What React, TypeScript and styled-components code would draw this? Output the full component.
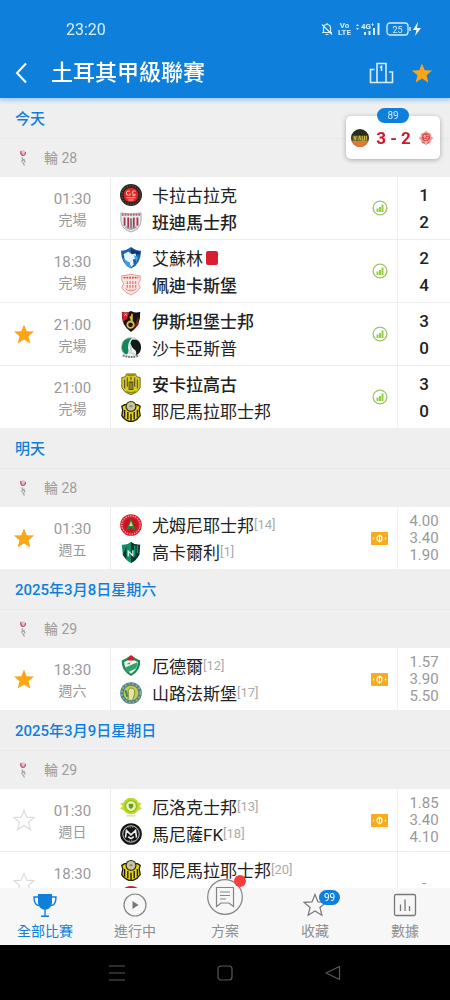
import React, { useState } from 'react';
import styled, { createGlobalStyle } from 'styled-components';

const Global = createGlobalStyle`
  * { box-sizing: border-box; }
  body {
    margin: 0;
    font-family: Roboto, "Noto Sans CJK TC", sans-serif;
    background: #efefef;
  }
  button {
    font: inherit;
    color: inherit;
    background: none;
    border: 0;
    padding: 0;
    cursor: pointer;
  }
  svg { display: block; flex: none; }
  h1, h2, h3, p { margin: 0; font-weight: inherit; font-size: inherit; }
`;

const Screen = styled.div`
  display: flex;
  flex-direction: column;
  height: 100vh;
`;

const Header = styled.header`
  position: relative;
  z-index: 2;
  background: #0f7fdc;
  color: #fff;
  box-shadow: 0 1px 5px 1px #8cc6f8;
`;

const StatusBar = styled.div`
  display: flex;
  align-items: center;
  justify-content: space-between;
  height: 48px;
  padding: 10px 28px 0 66px;
  font-size: 16px;
  color: #d8eefc;
`;

const StatusIcons = styled.div`
  display: flex;
  align-items: center;
  gap: 5px;
`;

const VoLte = styled.span`
  font-size: 8px;
  line-height: 7px;
  font-weight: 700;
  text-align: center;
`;

const TitleBar = styled.div`
  display: flex;
  align-items: center;
  height: 50px;
  padding: 0 17px 0 13px;
`;

const Title = styled.h1`
  flex: 1;
  margin-left: 20px;
  font-size: 22px;
  line-height: 30px;
  font-weight: 500;
`;

const HeaderActions = styled.div`
  display: flex;
  align-items: center;
  gap: 17px;
`;

const Content = styled.main`
  position: relative;
  display: flex;
  flex: 1;
  min-height: 0;
`;

const List = styled.div`
  flex: 1;
  overflow-y: auto;
  scrollbar-width: none;
  background: #efefef;
`;

const LiveCard = styled.button`
  position: absolute;
  z-index: 1;
  top: 18px;
  right: 10px;
  display: flex;
  align-items: center;
  justify-content: space-between;
  width: 94px;
  height: 43px;
  padding: 0 6px 0 5px;
  border-radius: 5px;
  background: #fff;
  box-shadow: 0 1px 5px rgba(0, 0, 0, 0.3);
  color: #d0162c;
  font-size: 17px;
  font-weight: 700;
`;

const LiveMinute = styled.span`
  position: absolute;
  top: -8px;
  left: 31px;
  width: 32px;
  border-radius: 8px;
  background: #0f7fdc;
  color: #cfe9fb;
  font-size: 10px;
  line-height: 15px;
  font-weight: 400;
  text-align: center;
`;

const DateHeading = styled.h2`
  height: 41px;
  padding-left: 15px;
  border-bottom: 1px solid #e8e8e8;
  color: #0f7fdc;
  font-size: 15px;
  line-height: 42px;
  font-weight: 500;
`;

const RoundHeading = styled.h3`
  display: flex;
  align-items: center;
  gap: 15px;
  height: 38px;
  padding-left: 17px;
  color: #9d9d9d;
  font-size: 14px;
  line-height: 20px;
`;

const MatchRow = styled.article`
  display: grid;
  grid-template-columns: 110px 1fr 53px;
  height: 62px;
  background: #fff;
  & + & {
    height: 63px;
    border-top: 1px solid #ececec;
  }
`;

const KickOff = styled.div`
  display: flex;
  align-items: center;
`;

const StarButton = styled.button`
  display: flex;
  justify-content: center;
  width: 48px;
`;

const TimeText = styled.div`
  width: 49px;
  margin-left: auto;
  margin-right: 13px;
  padding-top: 3px;
  color: #999;
  font-size: 15px;
  line-height: 21px;
  text-align: center;
  p + p { font-size: 14px; }
`;

const Fixture = styled.div`
  display: flex;
  align-items: center;
  justify-content: space-between;
  padding: 0 9px;
  border-left: 1px solid #ececec;
`;

const Team = styled.div<{ $winner?: boolean }>`
  display: flex;
  align-items: center;
  height: 27px;
  color: #222;
  font-size: 17px;
  font-weight: ${(p) => (p.$winner ? 500 : 400)};
  white-space: nowrap;
`;

const Teams = styled.div`
  align-self: flex-start;
  padding-top: 4px;
`;

const TeamName = styled.span`
  margin-left: 10px;
`;

const Rank = styled.span`
  color: #aaa;
  font-size: 13px;
`;

const RedCard = styled.span`
  width: 12px;
  height: 14px;
  margin-left: 3px;
  border-radius: 2px;
  background: #d81e30;
`;

const ScoreCell = styled.div`
  display: flex;
  flex-direction: column;
  padding-top: 5px;
  border-left: 1px solid #f1f1f1;
  color: #222;
  font-size: 17px;
  line-height: 27px;
  font-weight: 500;
  text-align: center;
`;

const OddsCell = styled.div`
  display: flex;
  flex-direction: column;
  justify-content: center;
  border-left: 1px solid #f1f1f1;
  color: #999;
  font-size: 15px;
  line-height: 17px;
  text-align: center;
`;

const TabBar = styled.nav`
  position: relative;
  z-index: 2;
  display: grid;
  grid-template-columns: repeat(5, 1fr);
  height: 57px;
  background: #f7f7f7;
`;

const Tab = styled.button<{ $active?: boolean }>`
  display: flex;
  flex-direction: column;
  align-items: center;
  gap: 4px;
  padding-top: 5px;
  color: ${(p) => (p.$active ? '#0f7fdc' : '#8f8f8f')};
  font-size: 14px;
  line-height: 20px;
`;

const TabIcon = styled.span<{ $raised?: boolean }>`
  position: relative;
  display: flex;
  align-items: center;
  justify-content: center;
  width: ${(p) => (p.$raised ? 36 : 24)}px;
  height: ${(p) => (p.$raised ? 36 : 24)}px;
  margin: ${(p) => (p.$raised ? '-14px 0 2px' : '0')};
`;

const TabCount = styled.span`
  position: absolute;
  top: -3px;
  left: 16px;
  width: 21px;
  border-radius: 8px;
  background: #0f7fdc;
  color: #fff;
  font-size: 10px;
  line-height: 15px;
  text-align: center;
`;

const TabDot = styled.span`
  position: absolute;
  top: -4px;
  right: -3px;
  width: 12px;
  height: 12px;
  border-radius: 50%;
  background: #fa3c3c;
`;

const SystemBar = styled.footer`
  display: flex;
  align-items: center;
  justify-content: space-between;
  height: 55px;
  padding: 0 24%;
  background: #000;
`;

const STAR = 'M12 1.5l3 7.4 8 .5-6.1 5.1 2 7.8L12 18l-6.9 4.3 2-7.8L1 9.4l8-.5z';

const Star = ({ on }: { on: boolean }) => (
  <svg width="22" height="22" viewBox="0 0 24 24">
    <path d={STAR} fill={on ? '#fca616' : 'none'} stroke={on ? 'none' : '#d9d9d9'} strokeWidth="1.2" />
  </svg>
);

const crests: Record<string, React.ReactNode> = {
  karagumruk: (
    <>
      <circle cx="12" cy="12" r="12" fill="#2a2322" />
      <circle cx="12" cy="12" r="10" fill="none" stroke="#8d6a5c" strokeWidth="1" strokeDasharray="1.5 1.5" />
      <circle cx="12" cy="12" r="8" fill="#e02524" />
      <path d="M11 8q-4-1-4 2t4 2v-2M17 8q-4-1-3.500 1.500t3 2q0 2-3 1M7 15h10M9 17.500h6" fill="none" stroke="#ffb3a5" strokeWidth="1.200" />
    </>
  ),
  bandirma: (
    <>
      <path d="M1 2q11 3 22 0v9q-1 9-11 12Q2 20 1 11z" fill="#e9eaec" stroke="#a9a4aa" />
      <path d="M2 4h20" stroke="#b4606c" strokeWidth="2.500" strokeDasharray="2 1" />
      <path d="M5 7v9M9 7v12M15 7v12M19 7v9" stroke="#a83448" strokeWidth="2" />
      <path d="M12 8v12" stroke="#777d85" strokeWidth="2" />
      <path d="M6 17q6 5 12 0" fill="none" stroke="#9aa2aa" strokeWidth="2" />
    </>
  ),
  erzurum: (
    <>
      <path d="M1 4q6 0 11-4 5 4 11 4-.500 15-11 19.500Q1.500 19 1 4z" fill="#1e62b0" />
      <path d="M12 1q5 4 10 4v3H12z" fill="#12396e" />
      <path d="M4 8l5-3 4 3 4-1 1 5-4 2 1 5-3 3-2-6-4 2z" fill="#e6f3fc" />
      <path d="M3 12l4 8 5 3-2-6zM15 9l5 2-2 6" fill="#3da0e4" />
    </>
  ),
  pendik: (
    <>
      <path d="M2 2q10-3 20 0v5l-2 3 2 5q-3 5-10 8-7-3-10-8l2-5-2-3z" fill="#fbe5e1" stroke="#d9958d" />
      <path d="M4 4h16" stroke="#c94f46" strokeWidth="2" strokeDasharray="2 1" />
      <path d="M8 8v8M11 8v9M14 8v9M17 8v7" stroke="#d98279" strokeWidth="1.500" strokeDasharray="3 1" />
      <path d="M6 16q6 5 12 0" fill="none" stroke="#d98279" />
    </>
  ),
  istanbul: (
    <>
      <path d="M2 2q5 2 10-1 5 3 10 1 1 15-10 22Q1 17 2 2z" fill="#161310" />
      <path d="M2 2q5 2 8 0l-2 7-5 4z" fill="#d8202d" />
      <path d="M20 5v11l-6 7 4-11z" fill="#8b1620" />
      <path d="M5 4l2 2M7 4L5 6" stroke="#fff" />
      <circle cx="11.500" cy="16" r="3.500" fill="none" stroke="#d9bd45" strokeWidth="2" />
      <path d="M13 4v10M11 7l2 5" stroke="#d9bd45" strokeWidth="1.800" />
    </>
  ),
  sakarya: (
    <>
      <circle cx="12" cy="11" r="10.500" fill="#f1f4f2" stroke="#b7c4bd" />
      <path d="M13 1Q1 1 2 13q1 5 5 6 3-1 2-6-1-7 4-12z" fill="#12885a" />
      <path d="M13 3q9-2 10 8 0 7-6 9 2-5-2-7-6-4-2-10z" fill="#121a1a" />
      <path d="M11 8q2 5 0 9l5 2" fill="none" stroke="#c9d4cf" strokeWidth="2" />
      <path d="M3 20q9 4 18 0" fill="none" stroke="#6f7a76" strokeWidth="2" strokeDasharray="2 1" />
    </>
  ),
  ankaragucu: (
    <>
      <path d="M7 1h10l1 3 4 1v11q-2 5-10 8Q4 21 2 16V5l4-1z" fill="#d9cc25" stroke="#6a641d" />
      <path d="M5 7v10M8 5v10M16 5v10M19 7v10" stroke="#5d581c" strokeWidth="1.300" />
      <path d="M12 4v4M10 10h4v8h-4zM12 10v8" fill="none" stroke="#4f4b18" strokeWidth="1.200" />
      <path d="M8 2.500h8M7 20q5 3 10 0" fill="none" stroke="#8d861f" strokeWidth="1.500" />
    </>
  ),
  malatya: (
    <>
      <path d="M2 7l3-2h14l3 2-1 4 1 6q-3 5-10 7-7-2-10-7l1-6z" fill="#e5d31c" stroke="#24220f" strokeWidth="1.500" />
      <path d="M5 11v8M8.500 13v8M15.500 13v8M19 11v8M12 15v8" stroke="#1d1c10" strokeWidth="1.500" />
      <circle cx="12" cy="7" r="6" fill="#2b2b22" />
      <circle cx="12" cy="7" r="4.700" fill="#c9c59c" />
      <path d="M10 7q2-3 4 0-2 2-4 0" fill="#8d8b72" />
    </>
  ),
  umraniye: (
    <>
      <circle cx="12" cy="12" r="11.800" fill="#d61f2b" />
      <circle cx="12" cy="12" r="10" fill="none" stroke="#f3aaae" strokeWidth="1.300" strokeDasharray="1.500 1.200" />
      <circle cx="12" cy="12" r="7.500" fill="#c31422" />
      <path d="M12 5l5 12h-3l-2-3-2 3H7z" fill="#1d8a48" />
      <path d="M12 8l2 5h-4z" fill="#e9d66b" />
    </>
  ),
  kocaeli: (
    <>
      <path d="M2 4q5 1 10-3 5 4 10 3l-1 11q-3 6-9 9-6-3-9-9z" fill="#0f8f63" />
      <path d="M12 1q5 4 10 3l-1 11q-3 6-9 9zM3 15l4-9v14z" fill="#123336" />
      <path d="M16 5v12M19 5v8" stroke="#149a6a" strokeWidth="1.500" />
      <path d="M9 17v-6l5 5v-6" fill="none" stroke="#d7f1e5" strokeWidth="1.500" />
    </>
  ),
  igdir: (
    <>
      <path d="M2 6l10-5 10 5q1 11-10 17Q1 17 2 6z" fill="#168a50" />
      <path d="M4.500 7.500L12 4l7.500 3.500q0 8-7.500 13-7.500-5-7.500-13z" fill="#eef8f1" />
      <path d="M8 3l4-3 4 3-1 3H9z" fill="#c9232e" />
      <path d="M5 14L19 8q0 4-2 7l-9 4zM7 10l4-2v2z" fill="#35a06b" />
    </>
  ),
  amed: (
    <>
      <circle cx="12" cy="12" r="11.800" fill="#4f8285" />
      <circle cx="12" cy="12" r="10" fill="none" stroke="#a7b992" strokeWidth="1.500" strokeDasharray="2 2" />
      <circle cx="12" cy="12" r="8" fill="#c9cb4a" />
      <path d="M9 19V9q2-4 5-2t2 6l-2 6" fill="#e7e2a0" stroke="#6c8a3d" />
      <path d="M6 9l2 7" stroke="#3d7d62" strokeWidth="2" />
    </>
  ),
  erok: (
    <>
      <path d="M0 8l5-1h14l5 1-3 3 3 3-5 2H5l-5-2 3-3z" fill="#d3de2a" />
      <circle cx="12" cy="11" r="9" fill="#b9d828" />
      <circle cx="12" cy="11" r="6" fill="#f2f6b8" stroke="#8fc02c" strokeWidth="1.500" />
      <path d="M9.500 8.500h5V12L12 14.500 9.500 12z" fill="#6a9a2b" />
      <path d="M7 21.500h10" stroke="#dfe89a" strokeWidth="2" />
    </>
  ),
  manisa: (
    <>
      <circle cx="12" cy="12" r="11.800" fill="#141414" />
      <circle cx="12" cy="12" r="9" fill="none" stroke="#d6d6d6" strokeWidth="1" />
      <path d="M6 16l1-8 5 5 5-5 1 8M9 15l3 2 3-2" fill="none" stroke="#efefef" strokeWidth="1.700" />
      <path d="M8 4.500h8M7 19.500h10" stroke="#999" strokeDasharray="1.500 1" />
    </>
  ),
  redRound: (
    <>
      <circle cx="12" cy="12" r="12" fill="#c9202c" />
      <circle cx="12" cy="13" r="8" fill="#a51622" />
    </>
  ),
  liveHome: (
    <>
      <circle cx="12" cy="12" r="12" fill="#2c2b1d" />
      <path d="M1 16q11-5 22 0-3 8-11 8T1 16z" fill="#dd7a38" />
      <path d="M2 9h20v7H2z" fill="#6d6728" />
      <path d="M4 9l1.500 6L7 9M10 15l1.500-6 1.500 6M15 9v6h3V9M20.500 9v6" fill="none" stroke="#c9b541" strokeWidth="1.300" />
    </>
  ),
  liveAway: (
    <>
      <path d="M5 5l4-1 3-3 3 3 4 1 1 5 3 2-3 3-2 5-4 1-2 2-2-2-4-1-2-5-3-3 3-2z" fill="#ee9a94" />
      <circle cx="12" cy="11" r="6" fill="#db4748" />
      <path d="M9 8h2v3H9zM13 8h3M13 11h3M9 14h6M12 16v5" fill="none" stroke="#f9d0cb" strokeWidth="1.300" />
      <path d="M7 18l3 2M17 18l-3 2" stroke="#a65a56" strokeWidth="1.500" />
    </>
  ),
};

const Crest = ({ id, size = 22 }: { id: string; size?: number }) => (
  <svg width={size} height={size} viewBox="0 0 24 24" aria-hidden="true">{crests[id]}</svg>
);

const LeagueIcon = () => (
  <svg width="12" height="18" viewBox="0 0 12 18" aria-hidden="true">
    <circle cx="6" cy="4" r="2.800" fill="#dcc6cc" />
    <path d="M4 2q-1 3 1.500 4.500Q8.500 6.500 8.500 3" fill="none" stroke="#c2536a" strokeWidth="1.200" />
    <path d="M5 8.500l1 3M4 12.500l3-2 1 3M5.500 13l2 3.500" fill="none" stroke="#a5a5a5" strokeWidth="1.300" />
  </svg>
);

const StatsIcon = () => (
  <svg width="16" height="16" viewBox="0 0 16 16" aria-label="統計">
    <circle cx="8" cy="8" r="6.900" fill="none" stroke="#9fc46a" strokeWidth="1.400" />
    <path d="M5.500 8.500V12M8 7V12M10.500 4.500V12" stroke="#8fcb3c" strokeWidth="1.900" />
  </svg>
);

const OddsIcon = () => (
  <svg width="17" height="13" viewBox="0 0 17 13" aria-label="賠率">
    <rect width="17" height="13" rx="1" fill="#f7ab1d" />
    <ellipse cx="8.500" cy="6.500" rx="2.500" ry="2.800" fill="none" stroke="#fff" strokeWidth="1.200" />
    <path d="M8.500 2.500v8" stroke="#fff" strokeWidth="1" />
    <path d="M2.500 5.500v2M14.500 5.500v2" stroke="#fff3d5" strokeWidth="1.300" />
  </svg>
);

interface Side { name: string; crest: string; rank?: number; winner?: boolean; redCard?: boolean }
interface Match { time: string; status: string; star?: boolean; home: Side; away: Side; score?: [number, number]; odds?: string[] }
interface Day { date: string; round: string; matches: Match[] }

const days: Day[] = [
  {
    date: '今天', round: '輪 28',
    matches: [
      { time: '01:30', status: '完場', home: { name: '卡拉古拉克', crest: 'karagumruk' }, away: { name: '班迪馬士邦', crest: 'bandirma', winner: true }, score: [1, 2] },
      { time: '18:30', status: '完場', home: { name: '艾蘇林', crest: 'erzurum', redCard: true }, away: { name: '佩迪卡斯堡', crest: 'pendik', winner: true }, score: [2, 4] },
      { time: '21:00', status: '完場', star: true, home: { name: '伊斯坦堡士邦', crest: 'istanbul', winner: true }, away: { name: '沙卡亞斯普', crest: 'sakarya' }, score: [3, 0] },
      { time: '21:00', status: '完場', home: { name: '安卡拉高古', crest: 'ankaragucu', winner: true }, away: { name: '耶尼馬拉耶士邦', crest: 'malatya' }, score: [3, 0] },
    ],
  },
  {
    date: '明天', round: '輪 28',
    matches: [
      { time: '01:30', status: '週五', star: true, home: { name: '尤姆尼耶士邦', crest: 'umraniye', rank: 14 }, away: { name: '高卡爾利', crest: 'kocaeli', rank: 1 }, odds: ['4.00', '3.40', '1.90'] },
    ],
  },
  {
    date: '2025年3月8日星期六', round: '輪 29',
    matches: [
      { time: '18:30', status: '週六', star: true, home: { name: '厄德爾', crest: 'igdir', rank: 12 }, away: { name: '山路法斯堡', crest: 'amed', rank: 17 }, odds: ['1.57', '3.90', '5.50'] },
    ],
  },
  {
    date: '2025年3月9日星期日', round: '輪 29',
    matches: [
      { time: '01:30', status: '週日', star: false, home: { name: '厄洛克士邦', crest: 'erok', rank: 13 }, away: { name: '馬尼薩FK', crest: 'manisa', rank: 18 }, odds: ['1.85', '3.40', '4.10'] },
      { time: '18:30', status: '', star: false, home: { name: '耶尼馬拉耶士邦', crest: 'malatya', rank: 20 }, away: { name: '', crest: 'redRound' }, odds: ['-'] },
    ],
  },
];

const TeamLine = ({ side }: { side: Side }) => (
  <Team $winner={side.winner}>
    <Crest id={side.crest} />
    <TeamName>{side.name}</TeamName>
    {side.rank !== undefined && <Rank>[{side.rank}]</Rank>}
    {side.redCard && <RedCard />}
  </Team>
);

const MatchItem = ({ match }: { match: Match }) => {
  const [starred, setStarred] = useState(!!match.star);
  return (
    <MatchRow>
      <KickOff>
        {match.star !== undefined && (
          <StarButton aria-label="收藏比賽" aria-pressed={starred} onClick={() => setStarred(!starred)}>
            <Star on={starred} />
          </StarButton>
        )}
        <TimeText>
          <p>{match.time}</p>
          <p>{match.status || '\u00a0'}</p>
        </TimeText>
      </KickOff>
      <Fixture>
        <Teams>
          <TeamLine side={match.home} />
          <TeamLine side={match.away} />
        </Teams>
        {match.score && <StatsIcon />}
        {match.odds && match.odds.length > 1 && <OddsIcon />}
      </Fixture>
      {match.score && (
        <ScoreCell>
          {match.score.map((goals, i) => <span key={i}>{goals}</span>)}
        </ScoreCell>
      )}
      {match.odds && (
        <OddsCell>
          {match.odds.map((odd) => <span key={odd}>{odd}</span>)}
        </OddsCell>
      )}
    </MatchRow>
  );
};

export default function App() {
  return (
    <Screen>
      <Global />
      <Header>
        <StatusBar>
          <span>23:20</span>
          <StatusIcons>
            <svg width="12" height="14" viewBox="0 0 12 14" fill="none" stroke="#d8eefc" strokeWidth="1.200">
              <path d="M2.500 10V6q0-3.500 3.500-3.500T9.500 6v4M1 10.500h10M4.500 12.500h3M6 1v1.500M1 2.500l10 10" />
            </svg>
            <VoLte>Vo<br />LTE</VoLte>
            <svg width="25" height="14" viewBox="0 0 25 14">
              <path d="M0 4l1.500-2L3 4zM0 6l1.500 2L3 6z" fill="#d8eefc" />
              <text x="5" y="7" fontSize="8" fontWeight="700" fill="#d8eefc">4G⁺</text>
              <path d="M9 13v-3M13.500 13V9M18 13V6M22.500 13V1" stroke="#d8eefc" strokeWidth="2" />
            </svg>
            <svg width="36" height="14" viewBox="0 0 36 14">
              <rect x="1" y="1" width="21" height="12" rx="3" fill="none" stroke="#d8eefc" strokeWidth="1.300" />
              <path d="M24 5v4" stroke="#d8eefc" strokeWidth="1.500" />
              <text x="11.500" y="10.500" fontSize="9" textAnchor="middle" fill="#d8eefc">25</text>
              <path d="M32 0l-5 8h3.500L29 14l6-8h-4z" fill="#fff" />
            </svg>
          </StatusIcons>
        </StatusBar>
        <TitleBar>
          <button aria-label="返回">
            <svg width="18" height="22" viewBox="0 0 18 22" fill="none" stroke="#fff" strokeWidth="2">
              <path d="M13 1.500L4 11l9 9.500" />
            </svg>
          </button>
          <Title>土耳其甲級聯賽</Title>
          <HeaderActions>
            <button aria-label="積分榜">
              <svg width="25" height="22" viewBox="0 0 25 22" fill="none" stroke="#d8eefc" strokeWidth="1.600">
                <path d="M8 20.500V1.500h9v19M5.500 7.500H1.500v13h22V10H20M11 5.500l1.500-1V9" />
              </svg>
            </button>
            <button aria-label="收藏聯賽"><Star on /></button>
          </HeaderActions>
        </TitleBar>
      </Header>

      <Content>
        <LiveCard>
          <LiveMinute>89</LiveMinute>
          <Crest id="liveHome" size={18} />
          3 - 2
          <Crest id="liveAway" size={16} />
        </LiveCard>
        <List>
          {days.map((day) => (
            <section key={day.date}>
              <DateHeading>{day.date}</DateHeading>
              <RoundHeading><LeagueIcon />{day.round}</RoundHeading>
              {day.matches.map((match, i) => <MatchItem key={i} match={match} />)}
            </section>
          ))}
        </List>
      </Content>

      <TabBar>
        <Tab $active>
          <TabIcon>
            <svg width="24" height="24" viewBox="0 0 24 24">
              <path d="M5 1h14v9q-1 5-5 6.500h-4Q6 15 5 10z" fill="#0f7fdc" />
              <path d="M5 4H1q0 8 5 8.500M19 4h4q0 8-5 8.500M12 16v7M8 23.200h8" fill="none" stroke="#0f7fdc" strokeWidth="1.400" />
            </svg>
          </TabIcon>
          全部比賽
        </Tab>
        <Tab>
          <TabIcon>
            <svg width="24" height="24" viewBox="0 0 24 24">
              <circle cx="12" cy="12" r="11" fill="none" stroke="#858585" strokeWidth="1.200" />
              <path d="M9.500 8l6 4-6 4z" fill="#777" />
            </svg>
          </TabIcon>
          進行中
        </Tab>
        <Tab>
          <TabIcon $raised>
            <svg width="36" height="36" viewBox="0 0 36 36">
              <circle cx="18" cy="18" r="17.300" fill="#f7f7f7" stroke="#858585" strokeWidth="1.200" />
              <path d="M9.500 8.500h17v19l-4.500-3.500h-8l-4.500 3.500zM13 13h10M13 16.500h10M13 20h6" fill="none" stroke="#858585" strokeWidth="1.200" />
            </svg>
            <TabDot />
          </TabIcon>
          方案
        </Tab>
        <Tab>
          <TabIcon>
            <svg width="24" height="24" viewBox="0 0 24 24">
              <path d={STAR} fill="none" stroke="#777" strokeWidth="1.200" />
            </svg>
            <TabCount>99</TabCount>
          </TabIcon>
          收藏
        </Tab>
        <Tab>
          <TabIcon>
            <svg width="24" height="24" viewBox="0 0 24 24" fill="none" stroke="#777" strokeWidth="1.300">
              <rect x="1.500" y="1.500" width="21" height="21" rx="1.500" />
              <path d="M7.500 11.500V18M12 6.500V18M16.500 13v5" />
            </svg>
          </TabIcon>
          數據
        </Tab>
      </TabBar>

      <SystemBar>
        <button aria-label="最近">
          <svg width="18" height="16" viewBox="0 0 18 16" stroke="#5a5a5a" strokeWidth="1.200">
            <path d="M1 1h16M1 8h16M1 15h16" />
          </svg>
        </button>
        <button aria-label="主頁">
          <svg width="16" height="16" viewBox="0 0 16 16" fill="none" stroke="#5a5a5a" strokeWidth="1.200">
            <rect x="1" y="1" width="14" height="14" rx="3" />
          </svg>
        </button>
        <button aria-label="返回">
          <svg width="18" height="16" viewBox="0 0 18 16" fill="none" stroke="#5a5a5a" strokeWidth="1.200" strokeLinejoin="round">
            <path d="M15.500 1.500v13L2 8z" />
          </svg>
        </button>
      </SystemBar>
    </Screen>
  );
}
